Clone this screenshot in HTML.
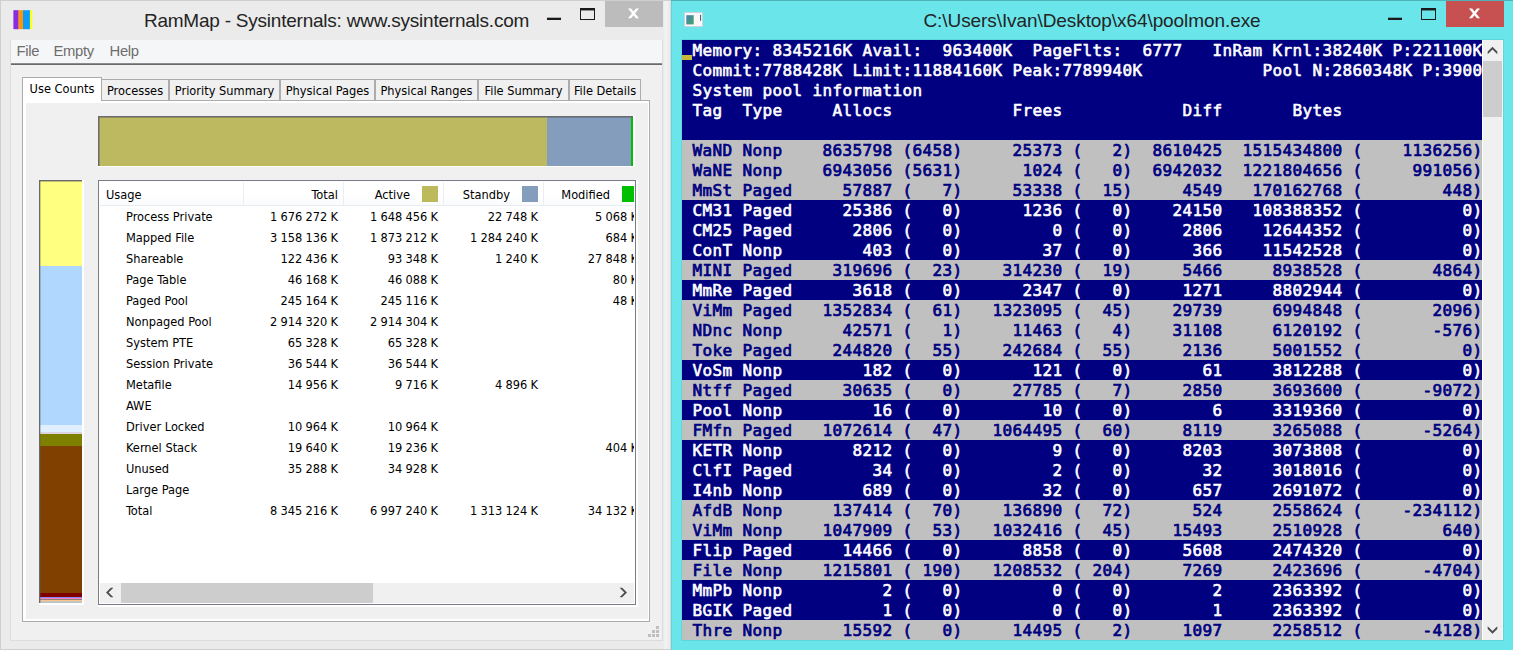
<!DOCTYPE html>
<html><head><meta charset="utf-8"><title>RamMap / poolmon</title>
<style>
html,body{margin:0;padding:0}
body{width:1513px;height:650px;overflow:hidden;position:relative;background:#6ae6eb;font-family:"DejaVu Sans Condensed","Liberation Sans",sans-serif}
div,span{position:absolute;box-sizing:border-box;white-space:pre}
.t{font-family:"Liberation Sans",sans-serif;color:#242424}
.ui{font-family:"DejaVu Sans Condensed","Liberation Sans",sans-serif;font-size:12.7px;color:#000;line-height:16px;height:16px}
.r{text-align:right}
.con{font-family:"DejaVu Sans Mono","Liberation Mono",monospace;font-weight:normal;-webkit-text-stroke:0.6px;font-size:16px;letter-spacing:0.3672px;line-height:20px;height:20px;left:0;width:800px;color:#fff;padding-top:1px;padding-left:0.5px}
.hl{background:#c0c0c0;color:#000080;-webkit-text-stroke:0.72px}
</style></head>
<body>
<div id="lw" style="left:0;top:0;width:671px;height:650px;background:#ebebeb"></div>
<div style="left:0;top:0;width:671px;height:1px;background:#cfcfcf"></div>
<div style="left:0;top:0;width:1px;height:650px;background:#cfcfcf"></div>
<div style="left:670px;top:0;width:1px;height:650px;background:#d9d9d9"></div>
<div style="left:0;top:649px;width:671px;height:1px;background:#cfcfcf"></div>
<div style="left:664px;top:1px;width:4px;height:648px;background:#f1f1f1"></div>
<svg style="position:absolute;left:10px;top:6px" width="28" height="28" viewBox="10 6 28 28"><rect x="13.4" y="10.2" width="5.3" height="19" fill="#8a2be2"/><rect x="18.6" y="10.2" width="4.5" height="19" fill="#ff9600"/><rect x="23" y="10.2" width="7" height="19" fill="#0a9bff"/><rect x="29.9" y="10.2" width="2.4" height="19" fill="#ffff1a"/></svg>
<div class="t" style="left:1px;top:9px;width:671px;text-align:center;font-size:19px;line-height:24px;letter-spacing:-0.225px">RamMap - Sysinternals: www.sysinternals.com</div>
<div style="left:547px;top:18px;width:14px;height:2px;background:#1a1a1a"></div>
<div style="left:547px;top:17px;width:14px;height:1px;background:rgba(26,26,26,.3)"></div>
<div style="left:580px;top:8px;width:15px;height:12px;border:1px solid #1a1a1a;border-top-width:2px"></div>
<div style="left:581px;top:10px;width:13px;height:1px;background:rgba(26,26,26,.45)"></div>
<div style="left:605px;top:1px;width:58px;height:26px;background:#bcbcbc"></div>
<svg style="position:absolute;left:627px;top:8px" width="14" height="12" viewBox="0 0 14 12"><path d="M1 0.6 L4.1 0.6 L12 10.2 L8.9 10.2 Z" fill="#fff"/><path d="M12 0.6 L8.9 0.6 L1 10.2 L4.1 10.2 Z" fill="#fff"/></svg>
<div style="left:11px;top:40px;width:651px;height:23px;background:#f5f6f7"></div>
<div style="left:11px;top:63px;width:651px;height:1px;background:#8c8c8c"></div>
<div style="left:11px;top:64px;width:651px;height:1px;background:#696969"></div>
<div class="t" style="left:16.5px;top:41px;font-size:14.8px;line-height:20px;color:#6d6d6d;letter-spacing:-0.3px">File</div>
<div class="t" style="left:53.5px;top:41px;font-size:14.8px;line-height:20px;color:#6d6d6d;letter-spacing:-0.3px">Empty</div>
<div class="t" style="left:109.5px;top:41px;font-size:14.8px;line-height:20px;color:#6d6d6d;letter-spacing:-0.3px">Help</div>
<div style="left:11px;top:65px;width:651px;height:575px;background:#f0f0f0"></div>
<div style="left:10px;top:40px;width:653px;height:601px;border:1px solid #dcdcdc;border-top:none"></div>
<div style="left:22px;top:100px;width:628px;height:522px;background:#f0f0f0;border:1px solid #acacac"></div>
<div style="left:23px;top:101px;width:626px;height:520px;border:solid #fff;border-width:2px 1px 2px 3px"></div>
<div style="left:101px;top:79px;width:68px;height:21px;background:#f0f0f0;border:1px solid #acacac;border-bottom:none"></div>
<div class="ui" style="left:101px;top:83px;width:68px;text-align:center;line-height:16px">Processes</div>
<div style="left:169px;top:79px;width:111px;height:21px;background:#f0f0f0;border:1px solid #acacac;border-bottom:none"></div>
<div class="ui" style="left:169px;top:83px;width:111px;text-align:center;line-height:16px">Priority Summary</div>
<div style="left:280px;top:79px;width:95px;height:21px;background:#f0f0f0;border:1px solid #acacac;border-bottom:none"></div>
<div class="ui" style="left:280px;top:83px;width:95px;text-align:center;line-height:16px">Physical Pages</div>
<div style="left:375px;top:79px;width:103px;height:21px;background:#f0f0f0;border:1px solid #acacac;border-bottom:none"></div>
<div class="ui" style="left:375px;top:83px;width:103px;text-align:center;line-height:16px">Physical Ranges</div>
<div style="left:478px;top:79px;width:91px;height:21px;background:#f0f0f0;border:1px solid #acacac;border-bottom:none"></div>
<div class="ui" style="left:478px;top:83px;width:91px;text-align:center;line-height:16px">File Summary</div>
<div style="left:569px;top:79px;width:72px;height:21px;background:#f0f0f0;border:1px solid #acacac;border-bottom:none"></div>
<div class="ui" style="left:569px;top:83px;width:72px;text-align:center;line-height:16px">File Details</div>
<div style="left:22px;top:77px;width:80px;height:24px;background:#fff;border:1px solid #acacac;border-bottom:none"></div>
<div style="left:23px;top:100px;width:78px;height:3px;background:#fff"></div>
<div class="ui" style="left:22px;top:81px;width:80px;text-align:center">Use Counts</div>
<div style="left:98px;top:116px;width:537px;height:51px;background:#fff"></div>
<div style="left:98px;top:116px;width:535px;height:50px;background:#6a6a6e"></div>
<div style="left:99px;top:117px;width:448px;height:49px;background:#bdb961"></div>
<div style="left:547px;top:117px;width:84px;height:49px;background:#849dbd"></div>
<div style="left:631px;top:117px;width:2px;height:49px;background:#00c000"></div>
<div style="left:99px;top:117px;width:534px;height:1px;background:rgba(90,90,95,.45)"></div>
<div style="left:99px;top:117px;width:1px;height:49px;background:rgba(90,90,95,.45)"></div>
<div style="left:39px;top:180px;width:45px;height:425px;background:#fff"></div>
<div style="left:39px;top:180px;width:43px;height:423px;background:#6a6a6e"></div>
<div style="left:40px;top:181px;width:42px;height:85px;background:#ffff80"></div>
<div style="left:40px;top:266px;width:42px;height:159px;background:#b0d8ff"></div>
<div style="left:40px;top:425px;width:42px;height:7px;background:#e0f0ff"></div>
<div style="left:40px;top:432px;width:42px;height:2px;background:#dcd4e0"></div>
<div style="left:40px;top:434px;width:42px;height:12px;background:#808000"></div>
<div style="left:40px;top:446px;width:42px;height:147px;background:#804000"></div>
<div style="left:40px;top:593px;width:42px;height:4px;background:#800000"></div>
<div style="left:40px;top:597px;width:42px;height:1px;background:#8888ff"></div>
<div style="left:40px;top:598px;width:42px;height:1px;background:#ff80c0"></div>
<div style="left:40px;top:599px;width:42px;height:1px;background:#8c8478"></div>
<div style="left:40px;top:600px;width:42px;height:1px;background:#ffc488"></div>
<div style="left:40px;top:601px;width:42px;height:2px;background:#c0c4c4"></div>
<div style="left:40px;top:181px;width:42px;height:1px;background:rgba(90,90,95,.4)"></div>
<div style="left:40px;top:181px;width:1px;height:422px;background:rgba(90,90,95,.3)"></div>
<div style="left:98px;top:180px;width:540px;height:427px;background:#fff"></div>
<div style="left:98px;top:180px;width:538px;height:425px;background:#fff;border:1px solid #787c84"></div>
<div id="lv" style="left:100px;top:182px;width:534px;height:421px;overflow:hidden">
<div style="left:0;top:0;width:535px;height:23px;background:linear-gradient(#fff,#fff 55%,#fafbfc)"></div>
<div style="left:0;top:23px;width:535px;height:1px;background:#e9edf2"></div>
<div style="left:143px;top:0;width:1px;height:23px;background:#e9eef4"></div>
<div style="left:243px;top:0;width:1px;height:23px;background:#e9eef4"></div>
<div style="left:343px;top:0;width:1px;height:23px;background:#e9eef4"></div>
<div style="left:443px;top:0;width:1px;height:23px;background:#e9eef4"></div>
<div class="ui" style="left:6px;top:5px">Usage</div>
<div class="ui r" style="left:144px;top:5px;width:94px">Total</div>
<div class="ui r" style="left:244px;top:5px;width:66px">Active</div>
<div style="left:322px;top:4px;width:16px;height:16px;background:#bdb95d"></div>
<div class="ui r" style="left:344px;top:5px;width:66px">Standby</div>
<div style="left:422px;top:4px;width:16px;height:16px;background:#849dbd"></div>
<div class="ui r" style="left:444px;top:5px;width:66px">Modified</div>
<div style="left:522px;top:4px;width:16px;height:16px;background:#00c000"></div>
<div class="ui" style="left:26px;top:27px">Process Private</div>
<div class="ui r" style="left:144px;top:27px;width:94px;letter-spacing:-0.1px">1 676 272 K</div>
<div class="ui r" style="left:244px;top:27px;width:94px;letter-spacing:-0.1px">1 648 456 K</div>
<div class="ui r" style="left:344px;top:27px;width:94px;letter-spacing:-0.1px">22 748 K</div>
<div class="ui r" style="left:444px;top:27px;width:94px;letter-spacing:-0.1px">5 068 K</div>
<div class="ui" style="left:26px;top:48px">Mapped File</div>
<div class="ui r" style="left:144px;top:48px;width:94px;letter-spacing:-0.1px">3 158 136 K</div>
<div class="ui r" style="left:244px;top:48px;width:94px;letter-spacing:-0.1px">1 873 212 K</div>
<div class="ui r" style="left:344px;top:48px;width:94px;letter-spacing:-0.1px">1 284 240 K</div>
<div class="ui r" style="left:444px;top:48px;width:94px;letter-spacing:-0.1px">684 K</div>
<div class="ui" style="left:26px;top:69px">Shareable</div>
<div class="ui r" style="left:144px;top:69px;width:94px;letter-spacing:-0.1px">122 436 K</div>
<div class="ui r" style="left:244px;top:69px;width:94px;letter-spacing:-0.1px">93 348 K</div>
<div class="ui r" style="left:344px;top:69px;width:94px;letter-spacing:-0.1px">1 240 K</div>
<div class="ui r" style="left:444px;top:69px;width:94px;letter-spacing:-0.1px">27 848 K</div>
<div class="ui" style="left:26px;top:90px">Page Table</div>
<div class="ui r" style="left:144px;top:90px;width:94px;letter-spacing:-0.1px">46 168 K</div>
<div class="ui r" style="left:244px;top:90px;width:94px;letter-spacing:-0.1px">46 088 K</div>
<div class="ui r" style="left:444px;top:90px;width:94px;letter-spacing:-0.1px">80 K</div>
<div class="ui" style="left:26px;top:111px">Paged Pool</div>
<div class="ui r" style="left:144px;top:111px;width:94px;letter-spacing:-0.1px">245 164 K</div>
<div class="ui r" style="left:244px;top:111px;width:94px;letter-spacing:-0.1px">245 116 K</div>
<div class="ui r" style="left:444px;top:111px;width:94px;letter-spacing:-0.1px">48 K</div>
<div class="ui" style="left:26px;top:132px">Nonpaged Pool</div>
<div class="ui r" style="left:144px;top:132px;width:94px;letter-spacing:-0.1px">2 914 320 K</div>
<div class="ui r" style="left:244px;top:132px;width:94px;letter-spacing:-0.1px">2 914 304 K</div>
<div class="ui" style="left:26px;top:153px">System PTE</div>
<div class="ui r" style="left:144px;top:153px;width:94px;letter-spacing:-0.1px">65 328 K</div>
<div class="ui r" style="left:244px;top:153px;width:94px;letter-spacing:-0.1px">65 328 K</div>
<div class="ui" style="left:26px;top:174px">Session Private</div>
<div class="ui r" style="left:144px;top:174px;width:94px;letter-spacing:-0.1px">36 544 K</div>
<div class="ui r" style="left:244px;top:174px;width:94px;letter-spacing:-0.1px">36 544 K</div>
<div class="ui" style="left:26px;top:195px">Metafile</div>
<div class="ui r" style="left:144px;top:195px;width:94px;letter-spacing:-0.1px">14 956 K</div>
<div class="ui r" style="left:244px;top:195px;width:94px;letter-spacing:-0.1px">9 716 K</div>
<div class="ui r" style="left:344px;top:195px;width:94px;letter-spacing:-0.1px">4 896 K</div>
<div class="ui" style="left:26px;top:216px">AWE</div>
<div class="ui" style="left:26px;top:237px">Driver Locked</div>
<div class="ui r" style="left:144px;top:237px;width:94px;letter-spacing:-0.1px">10 964 K</div>
<div class="ui r" style="left:244px;top:237px;width:94px;letter-spacing:-0.1px">10 964 K</div>
<div class="ui" style="left:26px;top:258px">Kernel Stack</div>
<div class="ui r" style="left:144px;top:258px;width:94px;letter-spacing:-0.1px">19 640 K</div>
<div class="ui r" style="left:244px;top:258px;width:94px;letter-spacing:-0.1px">19 236 K</div>
<div class="ui r" style="left:444px;top:258px;width:94px;letter-spacing:-0.1px">404 K</div>
<div class="ui" style="left:26px;top:279px">Unused</div>
<div class="ui r" style="left:144px;top:279px;width:94px;letter-spacing:-0.1px">35 288 K</div>
<div class="ui r" style="left:244px;top:279px;width:94px;letter-spacing:-0.1px">34 928 K</div>
<div class="ui" style="left:26px;top:300px">Large Page</div>
<div class="ui" style="left:26px;top:321px">Total</div>
<div class="ui r" style="left:144px;top:321px;width:94px;letter-spacing:-0.1px">8 345 216 K</div>
<div class="ui r" style="left:244px;top:321px;width:94px;letter-spacing:-0.1px">6 997 240 K</div>
<div class="ui r" style="left:344px;top:321px;width:94px;letter-spacing:-0.1px">1 313 124 K</div>
<div class="ui r" style="left:444px;top:321px;width:94px;letter-spacing:-0.1px">34 132 K</div>
<div style="left:0;top:401px;width:535px;height:20px;background:#f0f0f0"></div>
<div style="left:21px;top:401px;width:252px;height:20px;background:#cdcdcd"></div>
<svg style="position:absolute;left:0;top:401px" width="21" height="20" viewBox="100 583 21 20"><path d="M106 592.5 L110.8 587.7 L113.4 587.7 L108.6 592.5 L113.4 597.3 L110.8 597.3 Z" fill="#4d4d4d"/></svg>
<svg style="position:absolute;left:512px;top:401px" width="21" height="20" viewBox="0 0 21 20"><path d="M15 9.5 L10.2 4.7 L7.6 4.7 L12.4 9.5 L7.6 14.3 L10.2 14.3 Z" fill="#4d4d4d"/></svg>
</div>
<div style="left:656px;top:626px;width:3px;height:3px;background:#bfbfbf"></div>
<div style="left:652px;top:630px;width:3px;height:3px;background:#bfbfbf"></div>
<div style="left:656px;top:630px;width:3px;height:3px;background:#bfbfbf"></div>
<div style="left:648px;top:634px;width:3px;height:3px;background:#bfbfbf"></div>
<div style="left:652px;top:634px;width:3px;height:3px;background:#bfbfbf"></div>
<div style="left:656px;top:634px;width:3px;height:3px;background:#bfbfbf"></div>
<div style="left:671px;top:0;width:842px;height:1px;background:#4fb2b8"></div>
<div style="left:671px;top:0;width:1px;height:650px;background:rgba(0,60,70,.10)"></div>
<svg style="position:absolute;left:680px;top:8px" width="28" height="24" viewBox="680 8 28 24"><defs><linearGradient id="cg" x1="0" y1="0" x2="1" y2="1"><stop offset="0" stop-color="#4a7fb4"/><stop offset="1" stop-color="#3fa862"/></linearGradient></defs><rect x="684.5" y="12.5" width="18" height="14" fill="#fbf7f9" stroke="#d9c3cf" stroke-width="0.6"/><rect x="686.3" y="15.2" width="7.4" height="9.2" fill="url(#cg)"/><rect x="700" y="14.8" width="1.1" height="6" fill="#3f6f6c"/></svg>
<div class="t" style="left:671px;top:9px;width:842px;text-align:center;font-size:19px;line-height:24px;letter-spacing:-0.08px">C:\Users\Ivan\Desktop\x64\poolmon.exe</div>
<div style="left:1388px;top:18px;width:14px;height:2px;background:#1a1a1a"></div>
<div style="left:1388px;top:17px;width:14px;height:1px;background:rgba(26,26,26,.3)"></div>
<div style="left:1421px;top:8px;width:15px;height:12px;border:1px solid #1a1a1a;border-top-width:2px"></div>
<div style="left:1422px;top:10px;width:13px;height:1px;background:rgba(26,26,26,.45)"></div>
<div style="left:1446px;top:1px;width:58px;height:26px;background:#c75050"></div>
<svg style="position:absolute;left:1468px;top:8px" width="14" height="12" viewBox="0 0 14 12"><path d="M1 0.6 L4.1 0.6 L12 10.2 L8.9 10.2 Z" fill="#fff"/><path d="M12 0.6 L8.9 0.6 L1 10.2 L4.1 10.2 Z" fill="#fff"/></svg>
<div id="con" style="left:682px;top:40px;width:800px;height:600px;background:#000080;overflow:hidden">
<div class="con" style="top:0px"> Memory: 8345216K Avail:  963400K  PageFlts:  6777   InRam Krnl:38240K P:221100K</div>
<div class="con" style="top:20px"> Commit:7788428K Limit:11884160K Peak:7789940K            Pool N:2860348K P:3900</div>
<div class="con" style="top:40px"> System pool information</div>
<div class="con" style="top:60px"> Tag  Type     Allocs            Frees            Diff       Bytes</div>
<div class="con" style="top:80px"></div>
<div class="con hl" style="top:100px"> WaND Nonp    8635798 (6458)     25373 (   2)  8610425  1515434800 (    1136256)</div>
<div class="con hl" style="top:120px"> WaNE Nonp    6943056 (5631)      1024 (   0)  6942032  1221804656 (     991056)</div>
<div class="con hl" style="top:140px"> MmSt Paged     57887 (   7)     53338 (  15)     4549   170162768 (        448)</div>
<div class="con" style="top:160px"> CM31 Paged     25386 (   0)      1236 (   0)    24150   108388352 (          0)</div>
<div class="con" style="top:180px"> CM25 Paged      2806 (   0)         0 (   0)     2806    12644352 (          0)</div>
<div class="con" style="top:200px"> ConT Nonp        403 (   0)        37 (   0)      366    11542528 (          0)</div>
<div class="con hl" style="top:220px"> MINI Paged    319696 (  23)    314230 (  19)     5466     8938528 (       4864)</div>
<div class="con" style="top:240px"> MmRe Paged      3618 (   0)      2347 (   0)     1271     8802944 (          0)</div>
<div class="con hl" style="top:260px"> ViMm Paged   1352834 (  61)   1323095 (  45)    29739     6994848 (       2096)</div>
<div class="con hl" style="top:280px"> NDnc Nonp      42571 (   1)     11463 (   4)    31108     6120192 (       -576)</div>
<div class="con hl" style="top:300px"> Toke Paged    244820 (  55)    242684 (  55)     2136     5001552 (          0)</div>
<div class="con" style="top:320px"> VoSm Nonp        182 (   0)       121 (   0)       61     3812288 (          0)</div>
<div class="con hl" style="top:340px"> Ntff Paged     30635 (   0)     27785 (   7)     2850     3693600 (      -9072)</div>
<div class="con" style="top:360px"> Pool Nonp         16 (   0)        10 (   0)        6     3319360 (          0)</div>
<div class="con hl" style="top:380px"> FMfn Paged   1072614 (  47)   1064495 (  60)     8119     3265088 (      -5264)</div>
<div class="con" style="top:400px"> KETR Nonp       8212 (   0)         9 (   0)     8203     3073808 (          0)</div>
<div class="con" style="top:420px"> ClfI Paged        34 (   0)         2 (   0)       32     3018016 (          0)</div>
<div class="con" style="top:440px"> I4nb Nonp        689 (   0)        32 (   0)      657     2691072 (          0)</div>
<div class="con hl" style="top:460px"> AfdB Nonp     137414 (  70)    136890 (  72)      524     2558624 (    -234112)</div>
<div class="con hl" style="top:480px"> ViMm Nonp    1047909 (  53)   1032416 (  45)    15493     2510928 (        640)</div>
<div class="con" style="top:500px"> Flip Paged     14466 (   0)      8858 (   0)     5608     2474320 (          0)</div>
<div class="con hl" style="top:520px"> File Nonp    1215801 ( 190)   1208532 ( 204)     7269     2423696 (      -4704)</div>
<div class="con" style="top:540px"> MmPb Nonp          2 (   0)         0 (   0)        2     2363392 (          0)</div>
<div class="con" style="top:560px"> BGIK Paged         1 (   0)         0 (   0)        1     2363392 (          0)</div>
<div class="con hl" style="top:580px"> Thre Nonp      15592 (   0)     14495 (   2)     1097     2258512 (      -4128)</div>
<div style="left:0;top:15px;width:10px;height:5px;background:#c8b83c"></div>
</div>
<div style="left:1482px;top:40px;width:21px;height:600px;background:#f0f0f0"></div>
<div style="left:1482px;top:40px;width:1px;height:600px;background:#fff"></div>
<div style="left:1502px;top:40px;width:1px;height:600px;background:#fff"></div>
<div style="left:1483px;top:61px;width:19px;height:56px;background:#cdcdcd"></div>
<div style="left:681px;top:39px;width:823px;height:602px;border:1px solid rgba(0,80,90,.10)"></div>
<svg style="position:absolute;left:1482px;top:40px" width="21" height="21" viewBox="1482 40 21 21"><path d="M1492.5 46.8 L1497.3 51.6 L1497.3 54.2 L1492.5 49.4 L1487.7 54.2 L1487.7 51.6 Z" fill="#4d4d4d"/></svg>
<svg style="position:absolute;left:1482px;top:620px" width="21" height="20" viewBox="0 0 21 20"><path d="M10.5 13.7 L15.3 8.9 L15.3 6.3 L10.5 11.1 L5.7 6.3 L5.7 8.9 Z" fill="#4d4d4d"/></svg>
</body></html>
